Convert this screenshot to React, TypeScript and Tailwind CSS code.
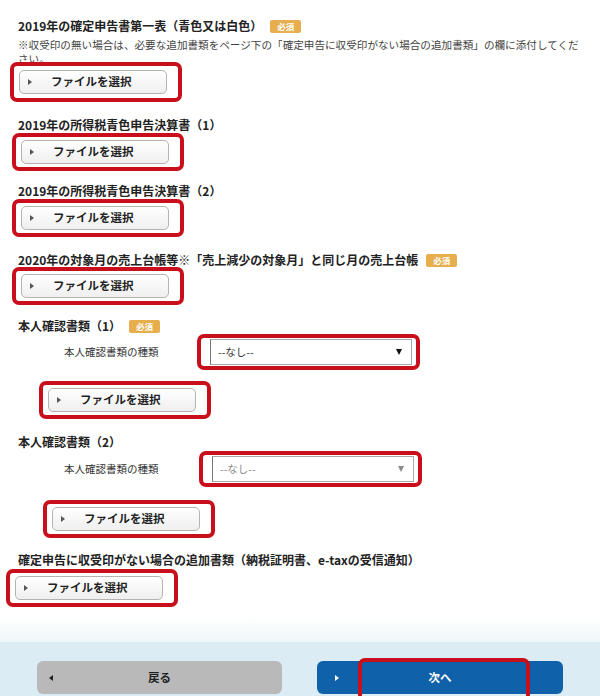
import React from "react";

const FONT = "font-['Noto_Sans_CJK_JP','Noto_Sans',sans-serif]";

/** Small "必須" badge */
const Required: React.FC = () => (
  <span className="ml-[8px] inline-flex h-[13px] w-[31px] items-center justify-center rounded-[2px] bg-[#e7ae4e] text-[8.5px] font-bold leading-none text-white">
    必須
  </span>
);

/** Section heading */
const Title: React.FC<{ text: string; required?: boolean; className?: string }> = ({
  text,
  required = false,
  className = "",
}) => (
  <div className={`flex h-[16px] items-center pl-[18px] text-[12px] font-bold leading-[16px] text-[#222] ${className}`}>
    <span>{text}</span>
    {required && <Required />}
  </div>
);

/** Red annotation frame */
const RedFrame: React.FC<{ className?: string; children: React.ReactNode }> = ({ className = "", children }) => (
  <div className={`relative rounded-[7px] border-[4px] border-[#c90f1b] bg-white ${className}`}>{children}</div>
);

/** "ファイルを選択" button wrapped in a red frame */
const FileButton: React.FC<{ className?: string }> = ({ className = "" }) => (
  <RedFrame className={`w-[172px] pl-[5px] ${className}`}>
    <button
      type="button"
      className="flex h-[24px] w-[148px] items-center rounded-[5px] border border-[#b3b3b3] bg-gradient-to-b from-white to-[#efefef] pl-[8px]"
    >
      <span className="h-0 w-0 border-y-[3px] border-l-[4px] border-y-transparent border-l-[#555]" />
      <span className="ml-[19px] text-[11.5px] font-bold text-[#222]">ファイルを選択</span>
    </button>
  </RedFrame>
);

/** Document type select row */
const TypeSelect: React.FC<{ muted?: boolean; labelWidth: string; className?: string }> = ({
  muted = false,
  labelWidth,
  className = "",
}) => (
  <div className={`flex items-center pl-[64px] ${className}`}>
    <span className={`${labelWidth} text-[10.5px] text-[#333]`}>本人確認書類の種類</span>
    <RedFrame className="w-[223px] py-[1px] pl-[9px]">
      <div className="flex h-[26px] w-[202px] items-center justify-between border border-[#a8a8a8] border-l-[#777] bg-white pl-[7px] pr-[9px]">
        <span className={`text-[10.5px] ${muted ? "text-[#8a8a8a]" : "text-[#333]"}`}>--なし--</span>
        <span
          className={`h-0 w-0 border-x-[3.5px] border-t-[6px] border-x-transparent ${
            muted ? "border-t-[#8a8a8a]" : "border-t-[#111]"
          }`}
        />
      </div>
    </RedFrame>
  </div>
);

export default function App() {
  return (
    <div className={`relative h-[696px] w-[600px] overflow-hidden bg-white ${FONT}`}>
      <div className="pt-[18px]">
        {/* 1 */}
        <Title text="2019年の確定申告書第一表（青色又は白色）" required />
        <p className="mt-[4px] w-[585px] pl-[18px] text-[10.6px] leading-[14px] text-[#444]">
          ※収受印の無い場合は、必要な追加書類をページ下の「確定申告に収受印がない場合の追加書類」の欄に添付してください。
        </p>
        <FileButton className="-mt-[4px] ml-[10px] py-[4px]" />

        {/* 2 */}
        <Title text="2019年の所得税青色申告決算書（1）" className="mt-[15px]" />
        <FileButton className="ml-[12px] py-[3px]" />

        {/* 3 */}
        <Title text="2019年の所得税青色申告決算書（2）" className="mt-[12px]" />
        <FileButton className="ml-[12px] py-[3px]" />

        {/* 4 */}
        <Title text="2020年の対象月の売上台帳等※「売上減少の対象月」と同じ月の売上台帳" required className="mt-[15px]" />
        <FileButton className="-mt-[1px] ml-[12px] py-[3px]" />

        {/* 5 */}
        <Title text="本人確認書類（1）" required className="mt-[13px]" />
        <TypeSelect labelWidth="w-[133px]" />
        <FileButton className="mt-[11px] ml-[39px] py-[3px]" />

        {/* 6 */}
        <Title text="本人確認書類（2）" className="mt-[15px]" />
        <TypeSelect muted labelWidth="w-[135px]" className="mt-[1px]" />
        <FileButton className="mt-[13px] ml-[43px] py-[3px]" />

        {/* 7 */}
        <Title text="確定申告に収受印がない場合の追加書類（納税証明書、e-taxの受信通知）" className="mt-[14px]" />
        <FileButton className="mt-[1px] ml-[6px] py-[3px]" />
      </div>

      {/* Footer */}
      <div className="mt-[9px] h-[26px] bg-gradient-to-b from-white to-[#eef6f9]" />
      <div className="flex h-[60px] gap-[35px] bg-[#dcecf4] px-[37px] pt-[19px]">
        <button
          type="button"
          className="relative flex h-[33px] w-[245px] items-center justify-center rounded-[6px] bg-[#b9b9b9]"
        >
          <span className="absolute left-[12px] h-0 w-0 border-y-[3px] border-r-[4px] border-y-transparent border-r-[#222]" />
          <span className="text-[11.5px] font-bold text-[#222]">戻る</span>
        </button>
        <button
          type="button"
          className="relative flex h-[33px] w-[246px] items-center justify-center rounded-[6px] bg-[#0f62a9]"
        >
          <span className="absolute left-[18px] h-0 w-0 border-y-[3px] border-l-[4px] border-y-transparent border-l-white" />
          <span className="text-[11.5px] font-bold text-white">次へ</span>
          <span className="absolute left-[41px] top-[-3px] h-[44px] w-[172px] rounded-[7px] border-[4px] border-[#c90f1b]" />
        </button>
      </div>
    </div>
  );
}
